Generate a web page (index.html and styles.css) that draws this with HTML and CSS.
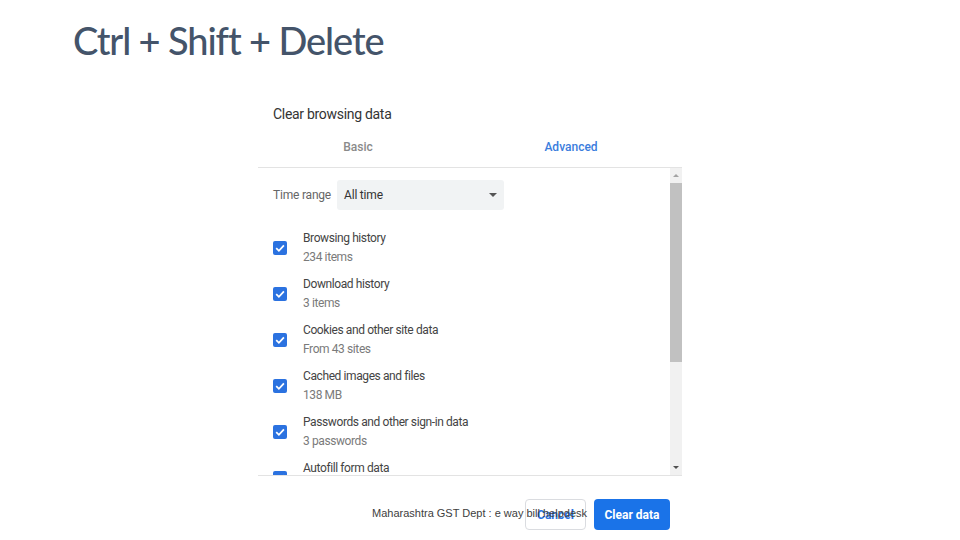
FILE: index.html
```html
<!DOCTYPE html>
<html lang="en">
<head>
    <meta charset="UTF-8">
    <meta name="viewport" content="width=device-width, initial-scale=1.0">
    <title>Ctrl + Shift + Delete</title>
    <link rel="stylesheet" href="styles.css">
</head>
<body>
    <div class="slide">
        <h1 class="slide-title">Ctrl + Shift + Delete</h1>

        <div class="dialog">
            <div class="dialog-header">Clear browsing data</div>

            <div class="tabs">
                <div class="tab">Basic</div>
                <div class="tab active">Advanced</div>
            </div>

            <div class="scroll-area">
                <div class="scroll-content">
                    <div class="time-range">
                        <span class="label">Time range</span>
                        <div class="select">
                            <span>All time</span>
                            <span class="caret"></span>
                        </div>
                    </div>

                    <div class="item">
                        <span class="checkbox"><svg viewBox="0 0 14 14"><path d="M3.2 7.2 L5.9 9.8 L10.9 4.4"/></svg></span>
                        <div class="item-text">
                            <div class="item-title">Browsing history</div>
                            <div class="item-sub">234 items</div>
                        </div>
                    </div>
                    <div class="item">
                        <span class="checkbox"><svg viewBox="0 0 14 14"><path d="M3.2 7.2 L5.9 9.8 L10.9 4.4"/></svg></span>
                        <div class="item-text">
                            <div class="item-title">Download history</div>
                            <div class="item-sub">3 items</div>
                        </div>
                    </div>
                    <div class="item">
                        <span class="checkbox"><svg viewBox="0 0 14 14"><path d="M3.2 7.2 L5.9 9.8 L10.9 4.4"/></svg></span>
                        <div class="item-text">
                            <div class="item-title">Cookies and other site data</div>
                            <div class="item-sub">From 43 sites</div>
                        </div>
                    </div>
                    <div class="item">
                        <span class="checkbox"><svg viewBox="0 0 14 14"><path d="M3.2 7.2 L5.9 9.8 L10.9 4.4"/></svg></span>
                        <div class="item-text">
                            <div class="item-title">Cached images and files</div>
                            <div class="item-sub">138 MB</div>
                        </div>
                    </div>
                    <div class="item">
                        <span class="checkbox"><svg viewBox="0 0 14 14"><path d="M3.2 7.2 L5.9 9.8 L10.9 4.4"/></svg></span>
                        <div class="item-text">
                            <div class="item-title">Passwords and other sign-in data</div>
                            <div class="item-sub">3 passwords</div>
                        </div>
                    </div>
                    <div class="item">
                        <span class="checkbox"><svg viewBox="0 0 14 14"><path d="M3.2 7.2 L5.9 9.8 L10.9 4.4"/></svg></span>
                        <div class="item-text">
                            <div class="item-title">Autofill form data</div>
                            <div class="item-sub">&nbsp;</div>
                        </div>
                    </div>
                </div>

                <div class="scrollbar">
                    <span class="arrow up"></span>
                    <div class="thumb"></div>
                    <span class="arrow down"></span>
                </div>
            </div>

            <div class="dialog-footer">
                <button class="btn cancel">Cancel</button>
                <button class="btn primary">Clear data</button>
            </div>
        </div>

        <div class="slide-footer">Maharashtra GST Dept : e way bill helpdesk</div>
    </div>
</body>
</html>
```

FILE: styles.css
```css
body {
    margin: 0;
    background: white;
    font-family: Roboto, "Liberation Sans", sans-serif;
}
.slide {
    position: relative;
    width: 960px;
    height: 540px;
    overflow: hidden;
}
.slide-title {
    margin: 0;
    padding: 17px 0 0 73px;
    font-family: Lato, "Open Sans", sans-serif;
    font-size: 38px;
    font-weight: 500;
    letter-spacing: -1.1px;
    line-height: 46px;
    color: #44546a;
}
.dialog {
    margin: 40px 0 0 258px;
    width: 424px;
}
.dialog-header {
    padding-left: 15px;
    font-size: 14px;
    line-height: 22px;
    color: #333;
    letter-spacing: -0.3px;
}
.tabs {
    display: grid;
    grid-template-columns: 200px 226px;
    margin-top: 6px;
    height: 31px;
    padding-top: 5px;
    border-bottom: 1px solid #e3e3e3;
    font-size: 12px;
    font-weight: 500;
}
.tab {
    text-align: center;
    line-height: 22px;
    color: #8a8a8a;
}
.tab.active {
    color: #3b7ddd;
}
.scroll-area {
    display: flex;
    height: 307px;
    border-bottom: 1px solid #e3e3e3;
    overflow: hidden;
}
.scroll-content {
    flex: 1;
    padding: 12px 0 0 15px;
}
.time-range {
    display: flex;
    align-items: center;
    gap: 6px;
    font-size: 12px;
    color: #666;
    letter-spacing: -0.2px;
}
.select {
    display: flex;
    align-items: center;
    justify-content: space-between;
    width: 153px;
    height: 30px;
    padding: 0 7px;
    background: #f1f3f4;
    border-radius: 3px;
    color: #333;
}
.caret {
    width: 0;
    height: 0;
    border-left: 4.5px solid transparent;
    border-right: 4.5px solid transparent;
    border-top: 4.5px solid #555;
}
.item {
    display: flex;
    align-items: center;
    gap: 16px;
    height: 46px;
}
.time-range + .item {
    margin-top: 15px;
}
.checkbox {
    width: 14px;
    height: 14px;
    border-radius: 2px;
    background: #2b72e0;
    flex-shrink: 0;
}
.checkbox svg {
    display: block;
    width: 14px;
    height: 14px;
    fill: none;
    stroke: white;
    stroke-width: 1.8;
}
.item-text {
    font-size: 12px;
    letter-spacing: -0.4px;
    line-height: 19px;
}
.item-title {
    color: #444;
}
.item-sub {
    color: #7a7a7a;
}
.scrollbar {
    display: flex;
    flex-direction: column;
    align-items: center;
    width: 12px;
    background: #f1f1f1;
}
.arrow {
    width: 0;
    height: 0;
    margin: 6px 0;
    border-left: 3px solid transparent;
    border-right: 3px solid transparent;
}
.arrow.up {
    border-bottom: 3px solid #a3a3a3;
}
.arrow.down {
    margin-top: auto;
    border-top: 3px solid #505050;
}
.thumb {
    width: 12px;
    height: 179px;
    background: #c1c1c1;
}
.dialog-footer {
    display: flex;
    justify-content: flex-end;
    gap: 8px;
    padding: 23px 12px 0 0;
}
.btn {
    height: 31px;
    padding: 0;
    border-radius: 4px;
    font-family: Roboto, sans-serif;
    font-size: 12px;
    font-weight: 700;
    white-space: nowrap;
}
.cancel {
    width: 61px;
    background: white;
    border: 1px solid #dadce0;
    color: #2b72e0;
}
.primary {
    width: 76px;
    background: #1a73e8;
    border: none;
    color: white;
}
.slide-footer {
    position: absolute;
    left: 372px;
    top: 507px;
    font-family: "Liberation Sans", sans-serif;
    font-size: 11px;
    color: #404040;
}
```
